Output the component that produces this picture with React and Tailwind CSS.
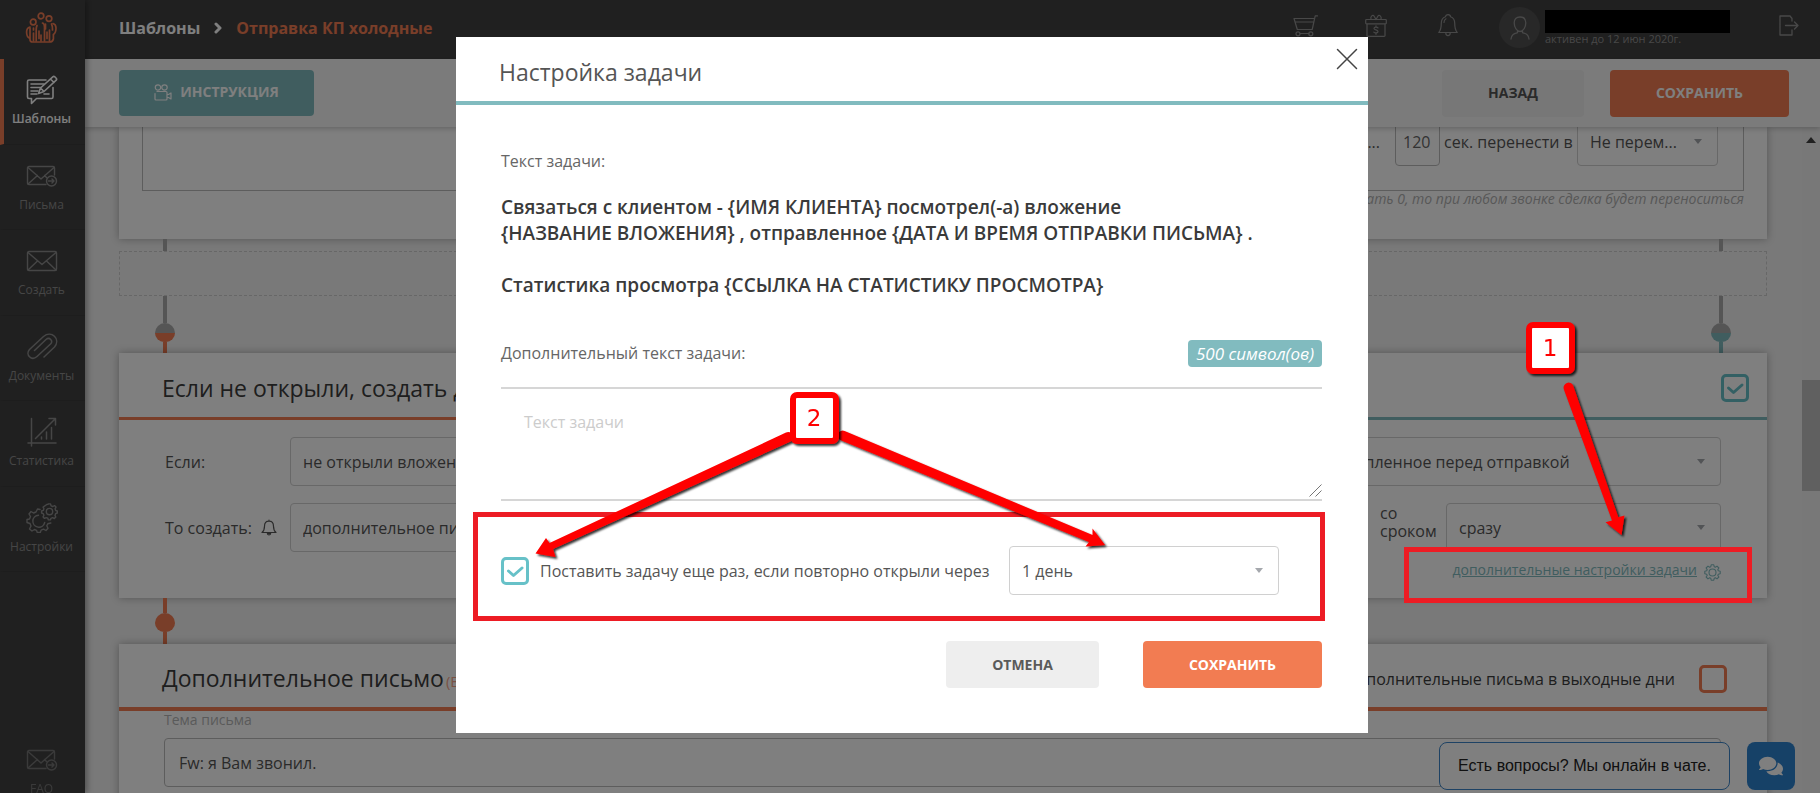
import React from "react";
import { FaComments } from "react-icons/fa";

function Icon({ w, h, children, className = "", sw = 1.6 }) {
  return (
    <svg
      width={w}
      height={h}
      viewBox={`0 0 ${w} ${h}`}
      fill="none"
      stroke="currentColor"
      strokeWidth={sw}
      strokeLinecap="round"
      strokeLinejoin="round"
      aria-hidden="true"
      className={"shrink-0 " + className}
    >
      {children}
    </svg>
  );
}

const LogoIcon = () => (
  <Icon w={32} h={32} sw={1.7}>
    <circle cx="16" cy="4" r="2.8" />
    <circle cx="8.2" cy="10" r="2.8" />
    <circle cx="24" cy="6.6" r="2.8" />
    <path d="M5 15c-2 .6-3.4 2.2-3.4 5s.6 5 2.6 6M5 16v11.500c0 2 1 2.500 2.600 2.500h16.800c2.400 0 3.600-1 4-3M28 11.500c2 .6 3 2 3 4.500s-1 5.500-2.600 6.500V27" />
    <path d="M8.500 16v2M8.500 21v8M12 13.500c-1 2-.8 3-.8 5v10.500M14 19v7.500M17.500 11c1.600.4 2 1.600 2 4v14M16 23v6M22 20v6.500M24.500 18v11" />
    <path d="M20.500 12v5M26.500 12c1 1.600 1 3 1 6" />
  </Icon>
);

const TemplatesIcon = () => (
  <Icon w={32} h={30}>
    <path d="M20 5H3a1.500 1.500 0 0 0-1.500 1.500V22A1.500 1.500 0 0 0 3 23.500h2.500v5l5-5h15A1.500 1.500 0 0 0 27 22V12.500" />
    <path d="M5 9h13M5 12.500h9.500M5 16h7M5 19h6M18 19h5" />
    <path d="m12.500 18.500 2-5.500L26.800 1.800a1.500 1.500 0 0 1 2 0l1.400 1.400a1.500 1.500 0 0 1 0 2L18 16.500zM24.500 4l3.500 3.500M14.500 13l3.500 3.500" />
  </Icon>
);

const MailSentIcon = () => (
  <Icon w={32} h={22} sw={1.4}>
    <path d="M20 19.500H3A1.500 1.500 0 0 1 1.500 18V3A1.500 1.500 0 0 1 3 1.500h24A1.500 1.500 0 0 1 28.500 3v7" />
    <path d="M2 2.500 15 14 28 2.500M2 19l9.500-8.500M18.500 10.500l2 2" />
    <circle cx="25.500" cy="16" r="5" />
    <path d="M22.500 16h5.500M26 14l2 2-2 2" />
  </Icon>
);

const MailIcon = () => (
  <Icon w={32} h={22} sw={1.4}>
    <rect x="1.500" y="1.500" width="29" height="19" rx="1.500" />
    <path d="M2 2.500 16 14.500 30 2.500M2 20l9.500-9M30 20l-9.500-9" />
  </Icon>
);

const ClipIcon = () => (
  <Icon w={32} h={28} sw={1.5}>
    <path d="M8.500 17.500 20 6.500c3.500-3 7.500 1.500 4.500 4.500L11 23.500c-5.500 5-12-2-7.500-7L17.500 3.500c8-6.500 17.500 2.500 11 10.500L18 24" />
  </Icon>
);

const StatsIcon = () => (
  <Icon w={30} h={30} sw={1.5}>
    <path d="M4.500 1.500V29M1 26h28M8.500 21.500 28 2M22 1.500h6.500V8" />
    <path d="M14.500 20v2M19.500 15v7M24.500 10.500V22" />
  </Icon>
);

const GearsIcon = () => (
  <Icon w={32} h={30} sw={1.4}>
    <path d="M14 6.500 11.500 6 10 9 7.500 10 5 8.500 3 11l1.500 2.500-1 2.500-2.500.5v3l3 1 1 2.500L3.500 26l2.500 2 2.500-1.500 2 .8.8 2.200h3l.8-2.400 2.400-1 2.500 1.400 2-2.200-1.200-2.600 1-2 3-.7" />
    <path d="M12.500 12.200a6 6 0 1 0 6.200 7.300" />
    <path d="m20.800 1.500 1-.1L22.500 0.900h2l.6 1.900 1.700.7 1.700-.9 1.500 1.500-.9 1.700.6 1.700 1.600.5v2l-1.700.7-.6 1.700.8 1.600-1.500 1.500-1.700-.8-1.600.6-.6 1.600h-2l-.6-1.700-1.600-.6-1.700.8-1.400-1.500.8-1.600-.7-1.700-1.600-.6v-2l1.700-.6.6-1.600-.8-1.700z" />
    <circle cx="23.500" cy="8.600" r="3.200" />
  </Icon>
);

const CameraIcon = () => (
  <Icon w={18} h={17} sw={1.2}>
    <circle cx="4" cy="3.500" r="2.700" />
    <circle cx="10.500" cy="3.500" r="2.700" />
    <path d="M1 9.500V15a1 1 0 0 0 1 1h10a1 1 0 0 0 1-1V8.500a1 1 0 0 0-1-1H3M13 10.500h1.500L17 9v6l-2.500-1.500H13" />
  </Icon>
);

const CartIcon = () => (
  <Icon w={25} h={22} sw={1.2}>
    <path d="M24.500.8h-2.300l-3 13.700H4.300M1 3.500h20.500M1 3.500l3.300 11M2.200 7h18.500" />
    <circle cx="5" cy="18.800" r="2" />
    <circle cx="17.800" cy="18.800" r="2" />
    <path d="M7 18.500h9" />
  </Icon>
);

const GiftIcon = () => (
  <Icon w={22} h={23} sw={1.2}>
    <path d="M1.500 5.500h19a.8.8 0 0 1 .8.8V9a.8.8 0 0 1-.8.8H1.500A.8.8 0 0 1 .7 9V6.300a.8.8 0 0 1 .8-.8zM2 10v11.500a.8.8 0 0 0 .8.8h16.400a.8.8 0 0 0 .8-.8V10M6 5.500C5 2 8 .5 9 2l2 3.500L13 2c1-1.500 4 0 3 3.500M11 11.800v1M11 19.300v1M13 13.800c-1-1.200-4-1-4 .7s4 1 4 2.900-3.200 1.800-4.200.7" />
  </Icon>
);

const BellIcon = () => (
  <Icon w={20} h={23} sw={1.2}>
    <path d="M7.500 2.800C7.500 0 12.500 0 12.500 2.800c3 1 4.200 3.400 4.200 6.200 0 5.500.8 7.500 2.500 9.500H.8C2.500 16.500 3.300 14.500 3.300 9c0-2.800 1.200-5.200 4.200-6.200zM7.800 19c0 3.400 4.400 3.400 4.400 0M6 8.500c0-1.600.6-3 2-3.700" />
  </Icon>
);

const SmallBellIcon = () => (
  <Icon w={16} h={17} sw={1.2}>
    <path d="M8 1v1.200c3 0 4.500 2.300 4.500 5 0 3.300.7 4.800 2.500 6.300H1c1.800-1.500 2.500-3 2.500-6.300 0-2.700 1.500-5 4.500-5M6.300 14.500c.4 1.900 3 1.900 3.400 0z" />
  </Icon>
);

const UserIcon = () => (
  <Icon w={20} h={24} sw={1.3}>
    <path d="M10 1c3.600 0 5.800 2 5.800 5.800 0 4.200-2.600 8.700-5.800 8.700S4.200 11 4.200 6.800C4.200 3 6.400 1 10 1zM1 23c.5-5 3.500-5.500 6.500-6.300v-2M19 23c-.5-5-3.500-5.500-6.500-6.300v-2" />
  </Icon>
);

const LogoutIcon = () => (
  <Icon w={20} h={21} sw={1.3}>
    <path d="M13 6V3.500L11 1H1v19h12v-5M6.500 10.500h12.500M15.500 7l3.500 3.500-3.500 3.500" />
  </Icon>
);

const GearIcon = () => (
  <Icon w={17} h={17} sw={1.1}>
    <path d="M7.200.8h2.600l.4 1.900 1.200.5L13 2.100l1.900 1.900-1.100 1.600.5 1.200 1.900.4v2.600l-1.900.4-.5 1.200 1.100 1.600-1.900 1.900-1.600-1.100-1.200.5-.4 1.900H7.200l-.4-1.900-1.200-.5L4 14.900 2.100 13l1.100-1.600-.5-1.200-1.900-.4V7.200l1.900-.4.5-1.200L2.100 4 4 2.100l1.600 1.100 1.200-.5z" />
    <circle cx="8.500" cy="8.500" r="3.500" />
  </Icon>
);

const NAV = [
  { label: "Шаблоны", icon: TemplatesIcon, active: true },
  { label: "Письма", icon: MailSentIcon },
  { label: "Создать", icon: MailIcon },
  { label: "Документы", icon: ClipIcon },
  { label: "Статистика", icon: StatsIcon },
  { label: "Настройки", icon: GearsIcon },
];

function NavItem({ label, icon: Glyph, active }) {
  return (
    <a
      href="#"
      className={
        "flex min-h-[85px] flex-1 flex-col items-center border-b border-l-4 border-b-[#3a3a3a] pr-1.5 pt-3 text-xs " +
        (active ? "border-l-[#f27c52] font-semibold text-white" : "border-l-transparent text-[#8c8c8c]")
      }
    >
      <span className="flex h-[38px] items-center">
        <Glyph />
      </span>
      <span className="leading-5">{label}</span>
    </a>
  );
}

function Select({ id, label, value, className = "" }) {
  return (
    <span className={"relative flex h-[49px] " + className}>
      <select
        id={id}
        aria-label={label}
        defaultValue={value}
        className="w-full appearance-none rounded border border-[#d0d0d0] bg-white pl-3 pr-8 text-base text-[#555]"
      >
        <option>{value}</option>
      </select>
      <svg width="8" height="5" viewBox="0 0 8 5" aria-hidden="true" className="pointer-events-none absolute right-4 top-[22px]">
        <path d="M0 0h8L4 5z" fill="#a5a8ad" />
      </svg>
    </span>
  );
}

function Check({ id, label, tone, checked }) {
  return (
    <span className="relative flex size-7 shrink-0">
      <input
        id={id}
        type="checkbox"
        aria-label={label}
        defaultChecked={checked}
        className={
          "size-7 appearance-none rounded-[5px] border-[3px] bg-transparent " +
          (tone === "orange" ? "border-[#f27c52]" : "border-[#67c1c8]")
        }
      />
      {checked && (
        <svg width="28" height="28" viewBox="0 0 28 28" fill="none" aria-hidden="true" className="pointer-events-none absolute inset-0">
          <path d="M7.500 14l5 4.500 8.500-7.500" stroke="#67c1c8" strokeWidth="3" strokeLinecap="round" strokeLinejoin="round" />
        </svg>
      )}
    </span>
  );
}

function Node({ top, bottom, left, right, tall }) {
  return (
    <div className="flex w-5 flex-col items-center">
      <span className={"w-1 " + (tall ? "h-[27px] " : "h-[15px] ") + left} />
      <span className={"h-[10px] w-5 rounded-t-full " + top} />
      <span className={"h-[9px] w-5 rounded-b-full " + bottom} />
      <span className={"w-1 flex-1 " + right} />
    </div>
  );
}

function Half({ side, title, tone, checkId, checked }) {
  const id = (name) => `${side}-${name}`;
  return (
    <section className="min-w-0 flex-1">
      <div
        className={
          "flex h-[67px] items-center justify-between border-b-[3px] pl-[43px] pr-[18px] pt-1.5 " +
          (tone === "orange" ? "border-[#f27c52]" : "border-[#81bbbf]")
        }
      >
        <h2 className="truncate text-[23px] text-[#3c3c3c]">{title}</h2>
        <Check id={checkId} label={title} tone="teal" checked={checked} />
      </div>
      <div className="flex flex-col gap-[17px] pl-[46px] pr-[46px] pt-[17px]">
        <div className="flex items-center">
          <label htmlFor={id("if")} className="w-[125px] shrink-0 text-base text-[#555]">
            Если:
          </label>
          <Select id={id("if")} value="не открыли вложение, прикрепленное перед отправкой" className="min-w-0 flex-1" />
        </div>
        <div className="flex items-center">
          <label htmlFor={id("then")} className="flex w-[125px] shrink-0 items-center gap-[9px] text-base text-[#555]">
            То создать: <SmallBellIcon />
          </label>
          <Select id={id("then")} value="дополнительное письмо" className="min-w-0 flex-1" />
          <label htmlFor={id("when")} className="ml-[14px] w-[66px] shrink-0 pb-3 text-base leading-[18px] text-[#555]">
            со сроком
          </label>
          <Select id={id("when")} value="сразу" className="w-[275px]" />
        </div>
      </div>
      <div className="flex items-center justify-end gap-[7px] pr-[46px] pt-[6px]">
        <a href="#" className="text-sm leading-6 text-[#81bbbf] underline">
          дополнительные настройки задачи
        </a>
        <span className="pt-1 text-[#81bbbf]">
          <GearIcon />
        </span>
      </div>
    </section>
  );
}

function Marker({ x, y, n }) {
  return (
    <g>
      <rect x={x + 3} y={y + 3} width="43" height="46" rx="4" fill="#fff" stroke="#f00" strokeWidth="6" />
      <text x={x + 24} y={y + 34} textAnchor="middle" fontSize="23" fill="#f00" fontFamily="DejaVu Sans, sans-serif">
        {n}
      </text>
    </g>
  );
}

function Annotations() {
  return (
    <svg width="1820" height="793" viewBox="0 0 1820 793" aria-hidden="true" className="pointer-events-none absolute left-0 top-0">
      <defs>
        <filter id="drop" x="-20%" y="-20%" width="140%" height="140%">
          <feDropShadow dx="2" dy="2" stdDeviation="1.2" floodColor="#000" floodOpacity="0.8" />
        </filter>
      </defs>
      <g fill="none" stroke="#ed1c24" strokeWidth="5">
        <rect x="475.500" y="514.500" width="847" height="104" />
        <rect x="1406.500" y="549.500" width="343" height="51" />
      </g>
      <g filter="url(#drop)" fill="#f00">
        <path d="M1563.800 389.200A5 5 0 0 1 1573.200 385.800L1618.300 517.300 1624.500 515.500 1621.500 535 1605.500 522.300 1612 520.500z" />
        <path d="M786 432.500A5 5 0 0 1 790.500 441.500L553 549 555.500 557 535.500 553.500 546 538 549.500 543z" />
        <path d="M840.800 440.300A5 5 0 0 1 844.600 431L1092.500 535 1092.500 528.500 1105 545 1085.500 546.500 1089 542z" />
      </g>
      <g filter="url(#drop)">
        <Marker x={1526} y={322} n="1" />
        <Marker x={790} y={392} n="2" />
      </g>
    </svg>
  );
}

function TaskDialog() {
  return (
    <div className="absolute inset-0 flex items-start justify-center overflow-hidden bg-black/50 pl-1 pt-[37px]">
      <div role="dialog" aria-labelledby="dialog-title" className="relative w-[912px] bg-white pb-[45px]">
        <header className="flex h-[68px] items-center border-b-4 border-[#81bbbf] pl-[43px] pt-1.5">
          <h1 id="dialog-title" className="text-[23px] text-[#555]">
            Настройка задачи
          </h1>
          <button type="button" aria-label="Закрыть" className="absolute right-[10px] top-[11px] text-[#444]">
            <Icon w={22} h={22} sw={1.5}>
              <path d="M1.500 1.500l19 19M20.500 1.500l-19 19" />
            </Icon>
          </button>
        </header>
        <form className="flex flex-col pl-[45px] pr-[46px]">
          <p className="pt-11 text-base leading-6 text-[#666]">Текст задачи:</p>
          <p className="pt-[21px] text-[19px] font-semibold leading-[26px] text-[#3a3a3a]">
            Связаться с клиентом - {"{ИМЯ КЛИЕНТА}"} посмотрел(-а) вложение
            <br />
            {"{НАЗВАНИЕ ВЛОЖЕНИЯ}"} , отправленное {"{ДАТА И ВРЕМЯ ОТПРАВКИ ПИСЬМА}"} .
            <br />
            <br />
            Статистика просмотра {"{ССЫЛКА НА СТАТИСТИКУ ПРОСМОТРА}"}
          </p>
          <div className="mt-[42px] flex items-start justify-between border-b-2 border-[#d6d6d6] pb-5">
            <label htmlFor="extra" className="text-base leading-[27px] text-[#666]">
              Дополнительный текст задачи:
            </label>
            <span className="rounded-sm bg-[#81bbbf] px-2 text-[17px] font-medium italic leading-[27px] text-white">
              500 символ(ов)
            </span>
          </div>
          <div className="relative flex">
            <textarea
              id="extra"
              placeholder="Текст задачи"
              className="h-[112px] w-full resize-none border-b-2 border-[#d6d6d6] px-[23px] pt-[21px] text-base leading-6 outline-none placeholder:text-[#ccc]"
            />
            <svg width="13" height="13" viewBox="0 0 13 13" fill="none" aria-hidden="true" className="pointer-events-none absolute bottom-1 right-0">
              <path d="M.5 12.500l12-12M6.500 12.500l6-6" stroke="#777" strokeWidth="1" />
            </svg>
          </div>
          <div className="flex items-center pt-[45px]">
            <Check id="repeat" label="Поставить задачу еще раз, если повторно открыли через" tone="teal" checked />
            <label htmlFor="repeat" className="pl-[11px] text-base text-[#555]">
              Поставить задачу еще раз, если повторно открыли через
            </label>
            <Select label="Через сколько" value="1 день" className="ml-auto mr-[43px] w-[270px]" />
          </div>
          <div className="flex justify-end gap-11 pt-[46px]">
            <button type="button" className="h-[47px] w-[153px] rounded bg-[#eee] text-sm font-bold text-[#5a5a5a]">
              ОТМЕНА
            </button>
            <button type="button" className="h-[47px] w-[179px] rounded bg-[#f27c52] text-sm font-bold text-white">
              СОХРАНИТЬ
            </button>
          </div>
        </form>
      </div>
    </div>
  );
}

export default function App() {
  return (
    <div className="relative flex h-screen overflow-hidden bg-[#f2f2f2] font-['Open_Sans','Noto_Sans',sans-serif]">
      <aside className="z-20 flex w-[85px] shrink-0 flex-col bg-[#414141] shadow-[2px_0_6px_rgba(0,0,0,0.35)]">
        <a href="#" aria-label="Главная" className="flex h-[59px] shrink-0 items-center justify-center pb-1 pr-1 text-[#f27c52]">
          <LogoIcon />
        </a>
        <nav className="flex h-[513px] shrink-0 flex-col">
          {NAV.map((item) => (
            <NavItem key={item.label} {...item} />
          ))}
        </nav>
        <div className="-mb-[21px] mt-auto flex h-[85px] opacity-70">
          <NavItem label="FAQ" icon={MailSentIcon} />
        </div>
      </aside>

      <div className="flex min-w-0 flex-1 flex-col">
        <header className="flex h-[59px] shrink-0 items-center bg-[#414141] pl-[34px] pr-[21px] text-[#909090]">
          <div className="flex items-center gap-3.5 pb-1 text-base font-bold">
            <a href="#" className="text-white">
              Шаблоны
            </a>
            <Icon w={8} h={12} sw={3} className="text-white">
              <path d="M2 2l4 4-4 4" />
            </Icon>
            <span className="text-[#f27c52]">Отправка КП холодные</span>
          </div>
          <div className="ml-auto flex items-center pb-1">
            <button type="button" aria-label="Корзина" className="mr-[47px] pb-1">
              <CartIcon />
            </button>
            <button type="button" aria-label="Подарок" className="mr-[51px] pb-1">
              <GiftIcon />
            </button>
            <button type="button" aria-label="Уведомления" className="mr-[41px] pb-1">
              <BellIcon />
            </button>
            <span className="mr-[5px] flex size-[41px] items-center justify-center rounded-full bg-[#505050]">
              <UserIcon />
            </span>
            <div className="mr-[49px]">
              <div className="h-[23px] w-[185px] bg-black" />
              <p className="text-[11px] leading-3">активен до 12 июн 2020г.</p>
            </div>
            <button type="button" aria-label="Выйти" className="pb-1">
              <LogoutIcon />
            </button>
          </div>
        </header>

        <div className="z-10 flex h-[68px] shrink-0 items-center justify-between bg-[#f7f7f7] pl-[34px] pr-[31px] shadow-[0_2px_5px_rgba(0,0,0,0.2)]">
          <button type="button" className="flex h-[46px] w-[195px] items-center justify-center gap-2 rounded bg-[#81bbbf] pb-0.5 text-sm font-bold text-white">
            <CameraIcon />
            ИНСТРУКЦИЯ
          </button>
          <div className="flex gap-[26px]">
            <button type="button" className="h-[47px] w-[142px] rounded bg-[#eee] text-sm font-bold text-[#555]">
              НАЗАД
            </button>
            <button type="button" className="h-[47px] w-[179px] rounded bg-[#f27c52] text-sm font-bold text-white">
              СОХРАНИТЬ
            </button>
          </div>
        </div>

        <div className="flex min-h-0 flex-1">
          <main className="flex min-w-0 flex-1 flex-col overflow-hidden pl-[34px] pr-[35px]">
            <section className="h-[112px] shrink-0 bg-white px-[23px] shadow-[0_0_8px_rgba(0,0,0,0.3)]">
              <div className="flex h-16 items-start justify-end gap-1 border-x border-b border-[#bbb] pr-[25px]">
                <div className="-mt-[10px] flex items-center text-base text-[#555]">
                  <label htmlFor="sec" className="pr-[15px]">
                    Если звонок длился более...
                  </label>
                  <input id="sec" defaultValue="120" className="h-[49px] w-[45px] rounded border border-[#bbb] px-[7px] text-base text-[#666]" />
                  <label htmlFor="move" className="w-[137px] whitespace-nowrap pl-1">
                    сек. перенести в
                  </label>
                  <Select id="move" value="Не перем..." className="w-[141px]" />
                </div>
              </div>
              <p className="text-right text-sm italic leading-4 text-[#b0b0b0]">
                Если указать 0, то при любом звонке сделка будет переноситься
              </p>
            </section>

            <div className="flex h-3 shrink-0 justify-between px-11">
              <span className="w-1 bg-[#ababab]" />
              <span className="w-1 bg-[#ababab]" />
            </div>
            <div className="h-[45px] shrink-0 border border-dashed border-[#cfcfcf]" />
            <div className="flex h-[57px] shrink-0 justify-between px-9">
              <Node tall left="bg-[#ababab]" top="bg-[#ababab]" bottom="bg-[#f27c52]" right="bg-[#f27c52]" />
              <Node tall left="bg-[#ababab]" top="bg-[#ababab]" bottom="bg-[#81bbbf]" right="bg-[#81bbbf]" />
            </div>

            <div className="flex h-[245px] shrink-0 bg-white shadow-[0_0_8px_rgba(0,0,0,0.3)]">
              <Half side="left" tone="orange" title="Если не открыли, создать дополнительное письмо" checkId="left-on" checked />
              <Half side="right" tone="teal" title="Если открыли, создать задачу" checkId="right-on" checked />
            </div>

            <div className="flex h-[46px] shrink-0 px-9">
              <Node left="bg-[#f27c52]" top="bg-[#f27c52]" bottom="bg-[#f27c52]" right="bg-[#f27c52]" />
            </div>

            <section className="shrink-0 bg-white pb-8 shadow-[0_0_8px_rgba(0,0,0,0.3)]">
              <div className="flex h-[67px] items-center justify-between border-b-4 border-[#f27c52] pl-[43px] pr-10 pt-1.5">
                <h2 className="text-[23px] text-[#3c3c3c]">
                  Дополнительное письмо <small className="-ml-1 text-[15px] text-[#f5a58a]">(Если не открыли)</small>
                </h2>
                <div className="flex items-center gap-6">
                  <label htmlFor="weekend" className="text-base text-[#3c3c3c]">
                    Отправлять дополнительные письма в выходные дни
                  </label>
                  <Check id="weekend" label="Отправлять дополнительные письма в выходные дни" tone="orange" />
                </div>
              </div>
              <div className="flex flex-col pl-[45px] pr-[46px]">
                <label htmlFor="subject" className="h-[27px] text-sm leading-[18px] text-[#b5b5b5]">
                  Тема письма
                </label>
                <input id="subject" defaultValue="Fw: я Вам звонил." className="h-[49px] rounded border border-[#bbb] px-[14px] text-base text-[#555]" />
              </div>
            </section>
          </main>

          <div className="flex w-[18px] shrink-0 flex-col items-center bg-[#f1f1f1] pt-[10px]">
            <svg width="10" height="6" viewBox="0 0 10 6" aria-hidden="true">
              <path d="M5 0l5 6H0z" fill="#404040" />
            </svg>
            <span className="mt-[237px] h-[111px] w-full bg-[#c1c1c1]" />
          </div>
        </div>
      </div>

      <div className="absolute bottom-[3px] right-[25px] z-20 flex gap-[17px]">
        <button type="button" className="h-12 w-[291px] rounded-lg border border-[#3d85c8] bg-white font-['Liberation_Sans',sans-serif] text-base text-[#222]">
          Есть вопросы? Мы онлайн в чате.
        </button>
        <button type="button" aria-label="Чат" className="flex size-12 items-center justify-center rounded-lg bg-[#2d82cf] text-2xl text-white">
          <FaComments />
        </button>
      </div>

      <div className="absolute inset-0 z-30">
        <TaskDialog />
        <Annotations />
      </div>
    </div>
  );
}
